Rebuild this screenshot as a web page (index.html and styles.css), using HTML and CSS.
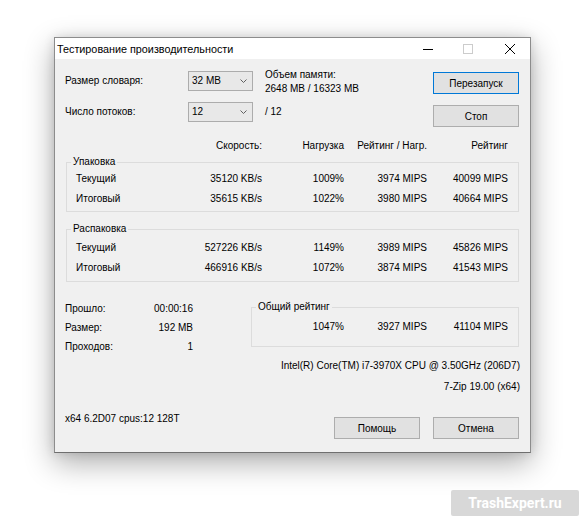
FILE: index.html
```html
<!DOCTYPE html>
<html lang="ru">
<head>
<meta charset="utf-8">
<title>Тестирование производительности</title>
<link rel="stylesheet" href="styles.css">
</head>
<body>
<div class="window">
  <div class="titlebar">
    <span class="title">Тестирование производительности</span>
    <div class="caption">
      <span class="cb cb-min"><svg width="10" height="10" viewBox="0 0 10 10"><path d="M0 5.5H10" stroke="#000" stroke-width="1"/></svg></span>
      <span class="cb cb-max"><svg width="10" height="10" viewBox="0 0 10 10"><rect x="0.5" y="0.5" width="9" height="9" fill="none" stroke="#cccccc" stroke-width="1"/></svg></span>
      <span class="cb cb-close"><svg width="10" height="10" viewBox="0 0 10 10"><path d="M0 0L10 10M10 0L0 10" stroke="#000" stroke-width="1"/></svg></span>
    </div>
  </div>
  <div class="client">
    <div class="top-row row1">
      <span class="lbl">Размер словаря:</span>
      <div class="combo"><span>32 MB</span><svg class="chev" width="7" height="4" viewBox="0 0 7 4"><path d="M0.5 0.5L3.5 3.5L6.5 0.5" fill="none" stroke="#606060"/></svg></div>
      <div class="mem">Объем памяти:<br>2648 MB / 16323 MB</div>
      <button class="btn btn-default">Перезапуск</button>
    </div>
    <div class="top-row row2">
      <span class="lbl">Число потоков:</span>
      <div class="combo"><span>12</span><svg class="chev" width="7" height="4" viewBox="0 0 7 4"><path d="M0.5 0.5L3.5 3.5L6.5 0.5" fill="none" stroke="#606060"/></svg></div>
      <div class="threads">/ 12</div>
      <button class="btn btn-stop">Стоп</button>
    </div>

    <div class="trow head">
      <span></span>
      <span>Скорость:</span>
      <span>Нагрузка</span>
      <span>Рейтинг / Нагр.</span>
      <span>Рейтинг</span>
    </div>

    <fieldset class="group g-pack">
      <legend>Упаковка</legend>
      <div class="trow"><span>Текущий</span><span>35120 KB/s</span><span>1009%</span><span>3974 MIPS</span><span>40099 MIPS</span></div>
      <div class="trow"><span>Итоговый</span><span>35615 KB/s</span><span>1022%</span><span>3980 MIPS</span><span>40664 MIPS</span></div>
    </fieldset>

    <fieldset class="group g-unpack">
      <legend>Распаковка</legend>
      <div class="trow"><span>Текущий</span><span>527226 KB/s</span><span>1149%</span><span>3989 MIPS</span><span>45826 MIPS</span></div>
      <div class="trow"><span>Итоговый</span><span>466916 KB/s</span><span>1072%</span><span>3874 MIPS</span><span>41543 MIPS</span></div>
    </fieldset>

    <div class="bottom">
      <div class="stats">
        <span>Прошло:</span><span class="v">00:00:16</span>
        <span>Размер:</span><span class="v">192 MB</span>
        <span>Проходов:</span><span class="v">1</span>
      </div>
      <fieldset class="group g-total">
        <legend>Общий рейтинг</legend>
        <div class="total-row"><span>1047%</span><span>3927 MIPS</span><span>41104 MIPS</span></div>
      </fieldset>
    </div>

    <div class="info cpu">Intel(R) Core(TM) i7-3970X CPU @ 3.50GHz (206D7)</div>
    <div class="info ver">7-Zip 19.00 (x64)</div>

    <div class="footer">
      <span class="sys">x64 6.2D07 cpus:12 128T</span>
      <div class="footer-btns">
        <button class="btn">Помощь</button>
        <button class="btn">Отмена</button>
      </div>
    </div>
  </div>
</div>
<div class="watermark">TrashExpert.ru</div>
</body>
</html>
```

FILE: styles.css
```css
html, body {
  margin: 0;
  padding: 0;
  background: #ffffff;
}

body {
  width: 585px;
  height: 521px;
  overflow: hidden;
  position: relative;
  font-family: "Liberation Sans", Arial, sans-serif;
  font-size: 10px;
  color: #000;
}

.window {
  box-sizing: border-box;
  margin: 37px 0 0 54px;
  width: 477px;
  height: 416px;
  border: 1px solid #8c8c8c;
  border-bottom-color: #6f6f6f;
  background: #f0f0f0;
  box-shadow: 0 10px 28px rgba(0, 0, 0, 0.32), 0 0 10px rgba(0, 0, 0, 0.12);
  display: flex;
  flex-direction: column;
}

/* Title bar */
.titlebar {
  height: 21px;
  background: #ffffff;
  display: flex;
  align-items: center;
  padding: 0 15px 0 2px;
}

.title {
  font-size: 10.8px;
  line-height: 14px;
  padding-top: 1px;
}

.caption {
  margin-left: auto;
  display: flex;
  align-items: center;
  padding-top: 1px;
}

.cb {
  display: block;
  width: 10px;
  height: 10px;
}

.cb svg { display: block; }

.cb-max { margin-left: 30px; }
.cb-close { margin-left: 32px; }

/* Client area */
.client {
  flex: 1;
  padding: 0 11px 0 10px;
  display: flex;
  flex-direction: column;
}

.top-row {
  display: grid;
  grid-template-columns: 123px 65px 180px 86px;
  align-items: start;
}

.row1 {
  margin-top: 12px;
  height: 23px;
}

.row2 {
  margin-top: 8px;
  height: 25px;
}

.lbl {
  line-height: 20px;
}

.combo {
  box-sizing: border-box;
  height: 20px;
  border: 1px solid #acacac;
  background: #e8e8e8;
  display: flex;
  align-items: center;
  padding: 0 0 0 3px;
  line-height: 18px;
}

.combo span { flex: 1; }

.chev {
  display: block;
  margin-right: 5px;
}

.mem {
  padding-left: 12px;
  line-height: 14px;
  margin-top: -3px;
}

.threads {
  padding-left: 12px;
  line-height: 20px;
}

.btn {
  box-sizing: border-box;
  width: 86px;
  height: 22px;
  border: 1px solid #adadad;
  background: #e1e1e1;
  font-family: "Liberation Sans", Arial, sans-serif;
  font-size: 10px;
  color: #000;
  padding: 0;
  margin: 0;
  border-radius: 0;
}

.btn-default {
  border-color: #0078d7;
  margin-top: 1px;
}

.btn-stop {
  margin-top: 3px;
}

/* Table */
.trow {
  display: grid;
  grid-template-columns: 110px 76px 82px 83px 81px;
  line-height: 20px;
  white-space: nowrap;
}

.trow span { text-align: right; }
.trow span:first-child { text-align: left; }

.head {
  margin: 12px 0 0 11px;
  line-height: 14px;
}

.group {
  margin: 0 0 0 1px;
  padding: 0;
  border: 1px solid #dcdcdc;
  min-width: 0;
}

.group legend {
  padding: 0 2px;
  margin-left: 4px;
  line-height: 14px;
}

.group .trow {
  padding-left: 9px;
}

.g-pack {
  margin-top: 2px;
  padding: 0 0 2px;
}

.g-unpack {
  margin-top: 10px;
  padding: 2px 0 3px;
}

/* Bottom section */
.bottom {
  display: flex;
  align-items: flex-start;
  margin-top: 17px;
}

.stats {
  width: 128px;
  display: grid;
  grid-template-columns: 1fr auto;
  line-height: 19px;
}

.stats .v { text-align: right; }

.g-total {
  flex: 1;
  margin: 1px 0 0 58px;
  padding: 3px 0 9px;
}

.total-row {
  display: grid;
  grid-template-columns: 92px 83px 81px;
  line-height: 20px;
}

.total-row span { text-align: right; }

.info {
  text-align: right;
  line-height: 14px;
  margin-right: -1px;
  white-space: nowrap;
}

.cpu { margin-top: 3px; }
.ver { margin-top: 7px; }

.footer {
  margin-top: 18px;
  display: flex;
  align-items: flex-start;
}

.sys {
  line-height: 14px;
}

.footer-btns {
  margin-left: auto;
  margin-top: 5px;
  display: flex;
  gap: 13px;
}

/* Watermark overlay */
.watermark {
  position: absolute;
  left: 451px;
  top: 490px;
  width: 128px;
  height: 26px;
  background: #d8d8d8;
  border-radius: 2px;
  color: #ffffff;
  font-family: Roboto, "Liberation Sans", sans-serif;
  font-weight: bold;
  font-size: 14px;
  line-height: 26px;
  text-align: center;
}
```
